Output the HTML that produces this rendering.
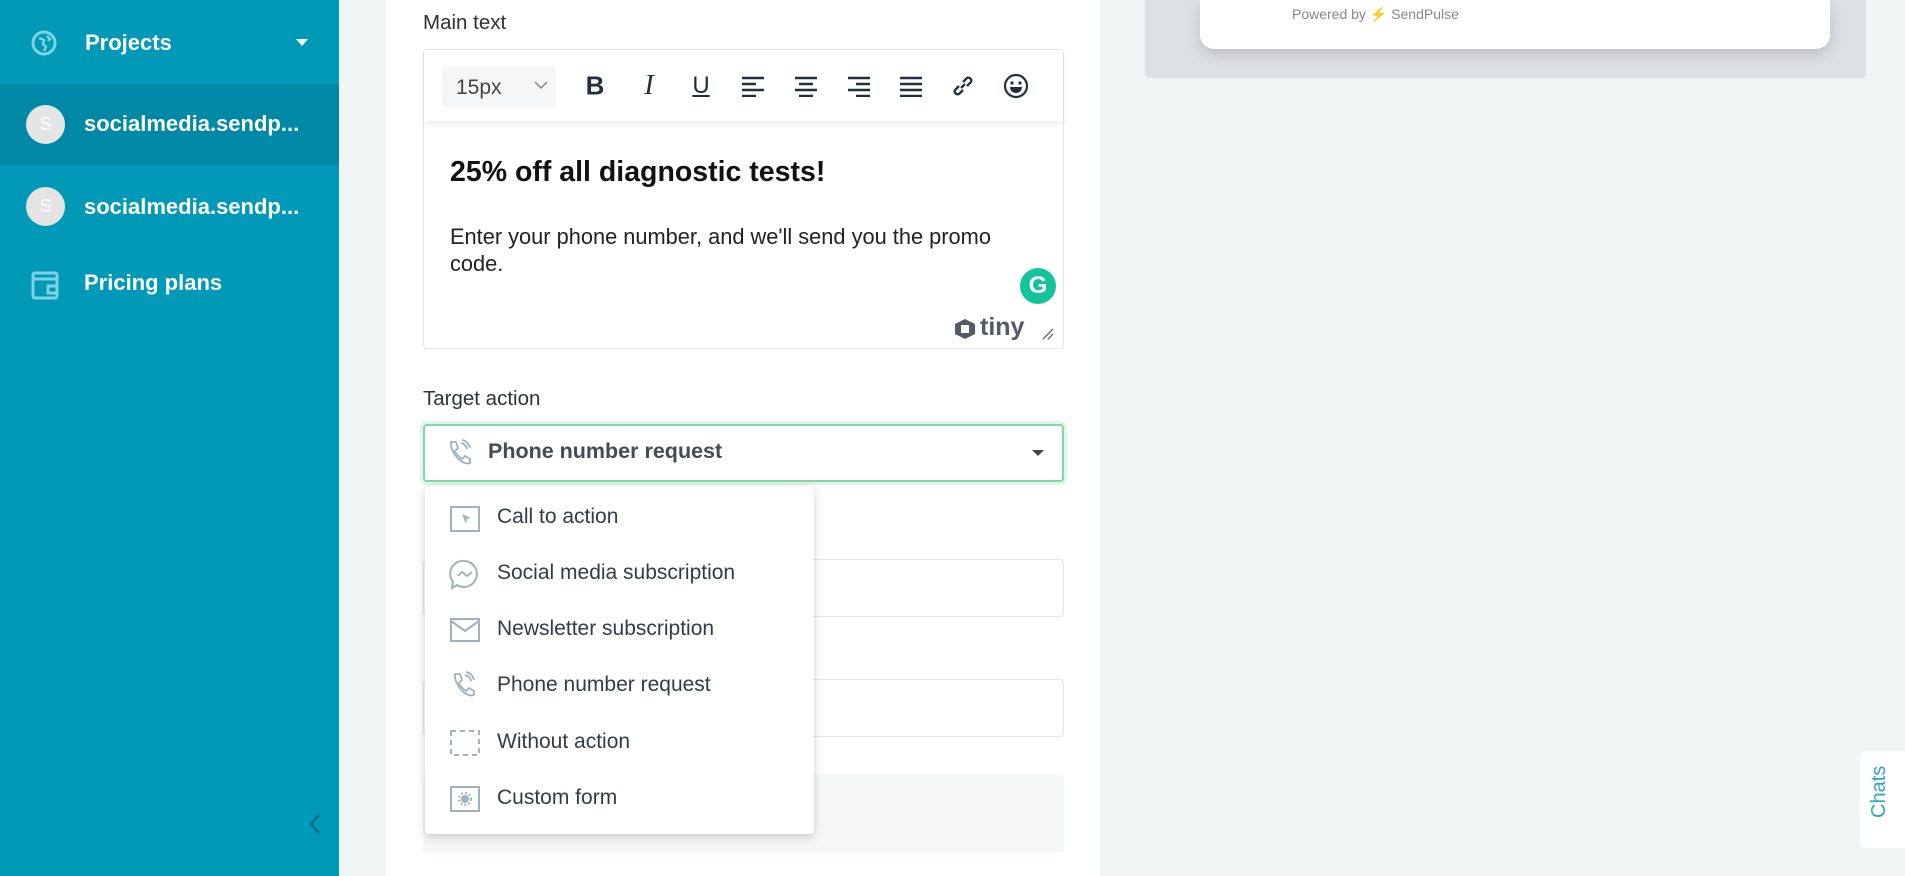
<!DOCTYPE html>
<html><head><meta charset="utf-8"><style>
*{box-sizing:border-box;margin:0;padding:0}
body{width:1905px;height:876px;overflow:hidden;background:#f0f4f5;font-family:"Liberation Sans",sans-serif;position:relative}
.abs{position:absolute}
.side{left:0;top:0;width:339px;height:876px;background:#009ab8}
.side .t{color:#fff;font-weight:bold;font-size:22px;position:absolute;left:84px}
.av{position:absolute;left:26px;width:39px;height:39px;border-radius:50%;background:#e4e4e4;color:#fff;font-size:18px;text-align:center;line-height:39px}
.panel{left:386px;top:0;width:714px;height:876px;background:#fff}
.lbl{font-size:20.5px;color:#2d3238;position:absolute;left:423px}
.tb{position:absolute;top:86px;transform:translate(-50%,-50%)}
.item{position:absolute;left:497px;font-size:21px;color:#333b44}
.ic{position:absolute;left:449px}
</style></head><body>
<div class="abs side">
 <svg class="abs" style="left:30px;top:29px" width="28" height="28" viewBox="0 0 28 28"><circle cx="14" cy="14" r="11" fill="none" stroke="#7fd1e3" stroke-width="3"/><path d="M9 9 l5 2 -1 4 3 3 -2 4 M17 7 l3 3 -2 2" fill="none" stroke="#7fd1e3" stroke-width="2.5"/></svg>
 <div class="t" style="left:85px;top:30px">Projects</div>
 <div class="abs" style="left:296px;top:39px;border-left:6px solid transparent;border-right:6px solid transparent;border-top:7px solid #fff"></div>
 <div class="abs" style="left:0;top:84px;width:339px;height:81px;background:#0089a6"></div>
 <div class="av" style="top:105px">S</div><div class="t" style="top:111px">socialmedia.sendp...</div>
 <div class="av" style="top:187px">S</div><div class="t" style="top:194px">socialmedia.sendp...</div>
 <svg class="abs" style="left:31px;top:270px" width="28" height="30" viewBox="0 0 28 30"><rect x="2" y="3" width="24" height="25" rx="2" fill="none" stroke="#7fd1e3" stroke-width="3"/><path d="M2 9 h24 M17 16 h9 v7 h-9z" fill="none" stroke="#7fd1e3" stroke-width="3"/></svg>
 <div class="t" style="top:270px">Pricing plans</div>
 <svg class="abs" style="left:308px;top:813px" width="14" height="22" viewBox="0 0 14 22"><path d="M11 2 L3 11 L11 20" fill="none" stroke="#0a6f86" stroke-width="2.5"/></svg>
</div>
<div class="abs panel"></div>
<div class="lbl" style="top:11px">Main text</div>
<div class="abs" style="left:423px;top:49px;width:641px;height:300px;border:1px solid #e1e7ea;border-radius:4px;background:#fff"></div>
<div class="abs" style="left:424px;top:50px;width:639px;height:71px;background:#fff;box-shadow:0 3px 6px rgba(0,0,0,.08)"></div>
<div class="abs" style="left:442px;top:66px;width:114px;height:41px;background:#f5f6f7;border-radius:4px;font-size:21px;color:#444;padding:10px 0 0 14px">15px</div>
<svg class="abs" style="left:533px;top:80px" width="16" height="10"><path d="M2 2 L8 8 L14 2" fill="none" stroke="#888" stroke-width="1.5"/></svg>
<div class="tb" style="left:595px;font-weight:bold;font-size:26px;color:#222f3e">B</div>
<div class="tb" style="left:649px;font-style:italic;font-family:'Liberation Serif',serif;font-size:28px;color:#222f3e">I</div>
<div class="tb" style="left:701px;font-size:24px;color:#222f3e;text-decoration:underline">U</div>
<svg class="tb" style="left:753px" width="24" height="22"><path d="M1 3h22M1 9h14M1 15h22M1 21h14" stroke="#222f3e" stroke-width="2.5"/></svg>
<svg class="tb" style="left:806px" width="24" height="22"><path d="M1 3h22M5 9h14M1 15h22M5 21h14" stroke="#222f3e" stroke-width="2.5"/></svg>
<svg class="tb" style="left:859px" width="24" height="22"><path d="M1 3h22M9 9h14M1 15h22M9 21h14" stroke="#222f3e" stroke-width="2.5"/></svg>
<svg class="tb" style="left:911px" width="24" height="22"><path d="M1 3h22M1 9h22M1 15h22M1 21h22" stroke="#222f3e" stroke-width="2.5"/></svg>
<svg class="tb" style="left:963px" width="26" height="26" viewBox="0 0 26 26"><path d="M11 15 l4-4 M9 13 l-4 4 a3 3 0 0 0 4 4 l4-4 M17 13 l4-4 a3 3 0 0 0 -4 -4 l-4 4" fill="none" stroke="#222f3e" stroke-width="2.3"/></svg>
<svg class="tb" style="left:1016px" width="26" height="26" viewBox="0 0 26 26"><circle cx="13" cy="13" r="11" fill="none" stroke="#222f3e" stroke-width="2.2"/><circle cx="9" cy="10" r="1.6" fill="#222f3e"/><circle cx="17" cy="10" r="1.6" fill="#222f3e"/><path d="M7 14 h12 a6 6 0 0 1 -12 0z" fill="#222f3e"/></svg>
<div class="abs" style="left:450px;top:156px;font-size:28.5px;font-weight:bold;color:#111">25% off all diagnostic tests!</div>
<div class="abs" style="left:450px;top:223px;font-size:21.8px;line-height:27px;color:#222;width:620px">Enter your phone number, and we'll send you the promo<br>code.</div>
<div class="abs" style="left:1020px;top:268px;width:36px;height:36px;border-radius:50%;background:#15c39a;color:#fff;font-weight:bold;font-size:24px;text-align:center;line-height:36px">G</div>
<svg class="abs" style="left:954px;top:318px" width="22" height="22" viewBox="0 0 22 22"><path d="M11 1 L21 6 V16 L11 21 L1 16 V6Z" fill="#545b68"/><rect x="7" y="7" width="8" height="8" fill="#fff"/></svg>
<div class="abs" style="left:980px;top:313px;font-size:25px;font-weight:bold;color:#545b68">tiny</div>
<svg class="abs" style="left:1042px;top:328px" width="12" height="12"><path d="M11 1 L1 11 M11 6 L6 11" stroke="#666" stroke-width="1.3"/></svg>
<div class="lbl" style="top:387px">Target action</div>
<div class="abs" style="left:423px;top:424px;width:641px;height:58px;border:2px solid #7fd8a8;border-radius:4px;box-shadow:0 0 0 3px #dff5e9;background:#fff"></div>
<svg class="abs" style="left:446px;top:439px" width="26" height="28" viewBox="0 0 26 28"><path d="M5 3 l5 0 2 6 -3 3 c2 4 4 6 7 8 l3-3 5 3 0 4 c-8 3 -20 -10 -19 -21z M15 4 a7 7 0 0 1 6 6 M16 1 a10 10 0 0 1 8 8" fill="none" stroke="#9fb2c0" stroke-width="1.8"/></svg>
<div class="abs" style="left:488px;top:439px;font-size:21.5px;font-weight:bold;color:#444b52">Phone number request</div>
<div class="abs" style="left:1032px;top:450px;border-left:6px solid transparent;border-right:6px solid transparent;border-top:6px solid #444"></div>
<div class="abs" style="left:423px;top:559px;width:641px;height:58px;border:1px solid #e1e7ea;border-radius:4px"></div>
<div class="abs" style="left:423px;top:679px;width:641px;height:58px;border:1px solid #e1e7ea;border-radius:4px"></div>
<div class="abs" style="left:423px;top:774px;width:641px;height:79px;background:#f6f8f8;border-radius:4px"></div>
<div class="abs" style="left:425px;top:486px;width:389px;height:348px;background:#fff;border-radius:4px;box-shadow:0 3px 10px rgba(0,0,0,.18)"></div>
<svg class="ic" style="top:505px" width="32" height="28" viewBox="0 0 32 28"><rect x="2" y="2" width="28" height="24" fill="none" stroke="#9fb2c0" stroke-width="2"/><path d="M13 9 l9 4 -4 1 -1 5z" fill="#9fb2c0"/></svg>
<div class="item" style="top:505px">Call to action</div>
<svg class="ic" style="top:559px" width="32" height="32" viewBox="0 0 32 32"><path d="M16 2 a13 13 0 1 1 -8 24 l-5 3 1 -6 a13 13 0 0 1 12 -21z M9 17 l4-4 5 4 5-4" fill="none" stroke="#9fb2c0" stroke-width="2"/></svg>
<div class="item" style="top:561px">Social media subscription</div>
<svg class="ic" style="top:617px" width="32" height="26" viewBox="0 0 32 26"><rect x="2" y="2" width="28" height="22" fill="none" stroke="#9fb2c0" stroke-width="2"/><path d="M2 4 L16 14 L30 4" fill="none" stroke="#9fb2c0" stroke-width="2"/></svg>
<div class="item" style="top:617px">Newsletter subscription</div>
<svg class="ic" style="top:671px" width="28" height="28" viewBox="0 0 26 28"><path d="M5 3 l5 0 2 6 -3 3 c2 4 4 6 7 8 l3-3 5 3 0 4 c-8 3 -20 -10 -19 -21z M15 4 a7 7 0 0 1 6 6 M16 1 a10 10 0 0 1 8 8" fill="none" stroke="#9fb2c0" stroke-width="1.8"/></svg>
<div class="item" style="top:673px">Phone number request</div>
<svg class="ic" style="top:729px" width="32" height="28" viewBox="0 0 32 28"><rect x="2" y="2" width="28" height="24" fill="none" stroke="#9fb2c0" stroke-width="2" stroke-dasharray="5 4"/></svg>
<div class="item" style="top:730px">Without action</div>
<svg class="ic" style="top:785px" width="32" height="28" viewBox="0 0 32 28"><rect x="2" y="2" width="28" height="24" fill="none" stroke="#9fb2c0" stroke-width="2"/><circle cx="16" cy="14" r="4" fill="#9fb2c0"/><circle cx="16" cy="14" r="6" fill="none" stroke="#9fb2c0" stroke-width="2" stroke-dasharray="2 2"/></svg>
<div class="item" style="top:786px">Custom form</div>
<div class="abs" style="left:1145px;top:0;width:721px;height:78px;background:#dde1e5;border-radius:0 0 4px 4px"></div>
<div class="abs" style="left:1200px;top:0;width:630px;height:49px;background:#fff;border-radius:0 0 14px 14px;box-shadow:0 6px 14px rgba(0,0,0,.15)"></div>
<div class="abs" style="left:1292px;top:6px;font-size:14px;color:#888">Powered by <span style="color:#f47b20;font-weight:bold">⚡</span> SendPulse</div>
<div class="abs" style="left:1860px;top:751px;width:45px;height:97px;background:#fff;border-radius:6px 0 0 6px"></div>
<div class="abs" style="left:1868px;top:818px;transform:rotate(-90deg);transform-origin:0 0;font-size:20px;color:#2aa6c2;white-space:nowrap">Chats</div>
</body></html>
